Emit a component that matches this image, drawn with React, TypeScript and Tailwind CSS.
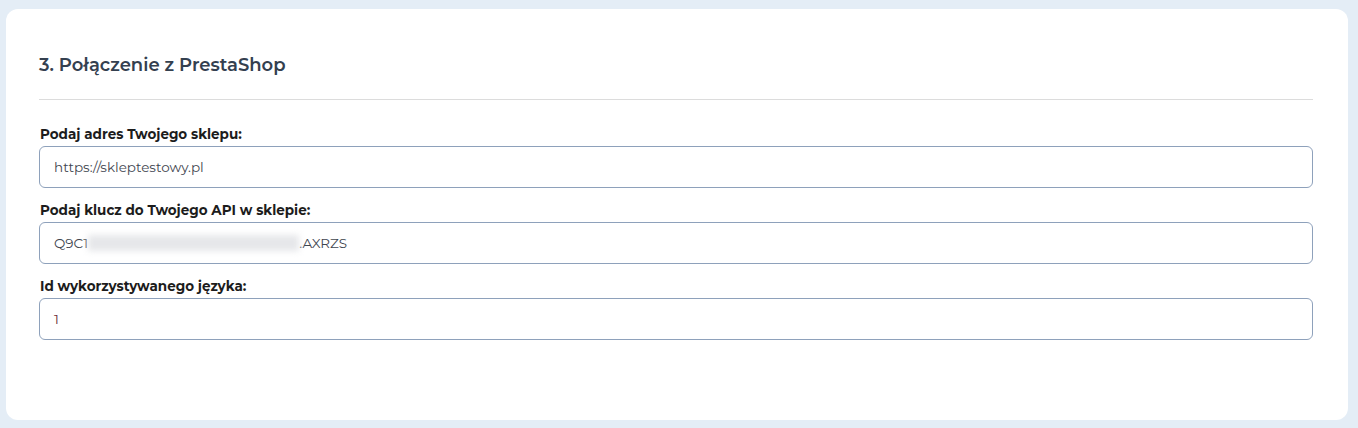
import React from 'react';

const font = { fontFamily: 'Montserrat, "Open Sans", "Noto Sans", sans-serif' };

interface FieldProps {
  label: string;
  children: React.ReactNode;
  valueClassName?: string;
}

function Field({ label, children, valueClassName = 'text-[#3f4650]' }: FieldProps) {
  return (
    <div className="flex flex-col gap-[2px]">
      <label className="text-[13.5px] leading-5 font-bold text-[#1c1c1c] pl-px">{label}</label>
      <div
        className={`h-[42px] flex items-center px-[14px] rounded-md border border-[#8ea1bb] text-[13.5px] ${valueClassName}`}
      >
        {children}
      </div>
    </div>
  );
}

export default function App() {
  return (
    <div className="min-h-[428px] bg-[#e4edf6] pt-[9px] pl-[6px] pr-[10px] pb-[9px]" style={font}>
      <div className="bg-white rounded-xl pl-[33px] pr-[35px] pt-[42px] pb-[80px]">
        <h2 className="text-[18px] leading-7 font-semibold text-[#34404f]">3. Połączenie z PrestaShop</h2>
        <hr className="mt-[20px] border-0 border-t border-[#dcdcdc]" />

        <div className="mt-[24px] flex flex-col gap-[12px]">
          <Field label="Podaj adres Twojego sklepu:">https://skleptestowy.pl</Field>
          <Field label="Podaj klucz do Twojego API w sklepie:">
            <span>Q9C1</span>
            <span className="inline-block h-[16px] w-[211px] bg-[#e6e7ea] blur-[3px]" />
            <span>.AXRZS</span>
          </Field>
          <Field label="Id wykorzystywanego języka:" valueClassName="text-[#6b2a3a]">
            1
          </Field>
        </div>
      </div>
    </div>
  );
}
